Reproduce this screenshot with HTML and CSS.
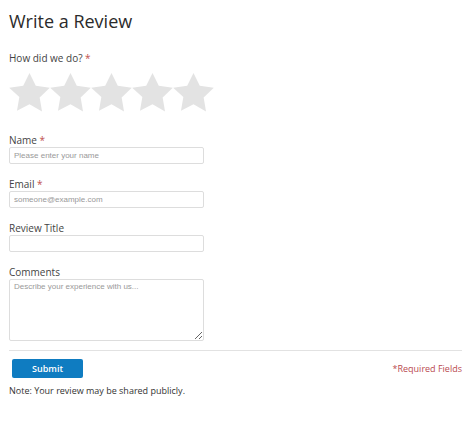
FILE: index.html
```html
<!DOCTYPE html>
<html>
<head>
<meta charset="utf-8">
<link rel="stylesheet" href="styles.css">
</head>
<body>
<div class="review">
  <h1 class="title">Write a Review</h1>
  <div class="label rating-label">How did we do? <span class="req">*</span></div>
  <div class="stars">
    <svg class="star" viewBox="0 0 24 24"><path d="M12 .587l3.668 7.431 8.2 1.192-5.934 5.787 1.4 8.168L12 18.896l-7.334 3.857 1.4-8.168L.132 9.21l8.2-1.192z"/></svg>
    <svg class="star" viewBox="0 0 24 24"><path d="M12 .587l3.668 7.431 8.2 1.192-5.934 5.787 1.4 8.168L12 18.896l-7.334 3.857 1.4-8.168L.132 9.21l8.2-1.192z"/></svg>
    <svg class="star" viewBox="0 0 24 24"><path d="M12 .587l3.668 7.431 8.2 1.192-5.934 5.787 1.4 8.168L12 18.896l-7.334 3.857 1.4-8.168L.132 9.21l8.2-1.192z"/></svg>
    <svg class="star" viewBox="0 0 24 24"><path d="M12 .587l3.668 7.431 8.2 1.192-5.934 5.787 1.4 8.168L12 18.896l-7.334 3.857 1.4-8.168L.132 9.21l8.2-1.192z"/></svg>
    <svg class="star" viewBox="0 0 24 24"><path d="M12 .587l3.668 7.431 8.2 1.192-5.934 5.787 1.4 8.168L12 18.896l-7.334 3.857 1.4-8.168L.132 9.21l8.2-1.192z"/></svg>
  </div>
  <div class="field first">
    <label class="label">Name <span class="req">*</span></label>
    <input class="input" type="text" placeholder="Please enter your name">
  </div>
  <div class="field">
    <label class="label">Email <span class="req">*</span></label>
    <input class="input" type="text" placeholder="someone@example.com">
  </div>
  <div class="field">
    <label class="label">Review Title</label>
    <input class="input" type="text">
  </div>
  <div class="field">
    <label class="label">Comments</label>
    <textarea class="input textarea" placeholder="Describe your experience with us..."></textarea>
  </div>
  <hr class="divider">
  <div class="actions">
    <button class="submit" type="button">Submit</button>
    <span class="required">*Required Fields</span>
  </div>
  <p class="note">Note: Your review may be shared publicly.</p>
</div>
</body>
</html>
```
FILE: styles.css
```css
html, body {
  margin: 0;
  padding: 0;
  background: #fff;
}
body {
  font-family: "Open Sans", "Liberation Sans", sans-serif;
  color: #333;
}
.review {
  padding: 10px 6px 0 9px;
  display: flex;
  flex-direction: column;
}
.title {
  margin: 0;
  font-size: 18px;
  line-height: 22px;
  font-weight: 400;
  color: #2b2b2b;
}
.label {
  display: block;
  font-size: 10px;
  line-height: 12px;
  color: #444;
}
.req {
  color: #c0504d;
}
.rating-label {
  margin-top: 20px;
}
.stars {
  display: flex;
  margin-top: 8px;
  gap: 0;
}
.star {
  width: 41px;
  height: 41px;
  fill: #e3e3e3;
}
.field {
  display: flex;
  flex-direction: column;
  gap: 1px;
  width: 195px;
  margin-top: 14px;
}
.field.first {
  margin-top: 21px;
}
.input {
  box-sizing: border-box;
  width: 195px;
  height: 17px;
  margin: 0;
  padding: 0 4px;
  border: 1px solid #ddd;
  border-radius: 2px;
  font-family: "Liberation Sans", Arial, sans-serif;
  font-size: 8px;
  color: #333;
  background: #fff;
  outline: none;
}
.input::placeholder {
  color: #999;
}
.textarea {
  height: 62px;
  padding: 2px 4px;
  resize: vertical;
}
.divider {
  margin: 9px 0 0 0;
  border: 0;
  border-top: 1px solid #e2e2e2;
  height: 0;
}
.actions {
  display: flex;
  justify-content: space-between;
  align-items: center;
  margin-top: 8px;
  padding-left: 3px;
}
.submit {
  width: 71px;
  height: 19px;
  border: 0;
  border-radius: 2px;
  background: #0f7cc1;
  color: #fff;
  font-family: "Open Sans", "Liberation Sans", sans-serif;
  font-size: 9px;
  font-weight: 600;
  padding: 0;
}
.required {
  font-size: 9px;
  color: #b94a4f;
}
.note {
  margin: 7px 0 0;
  font-size: 9px;
  line-height: 12px;
  color: #333;
}
```
